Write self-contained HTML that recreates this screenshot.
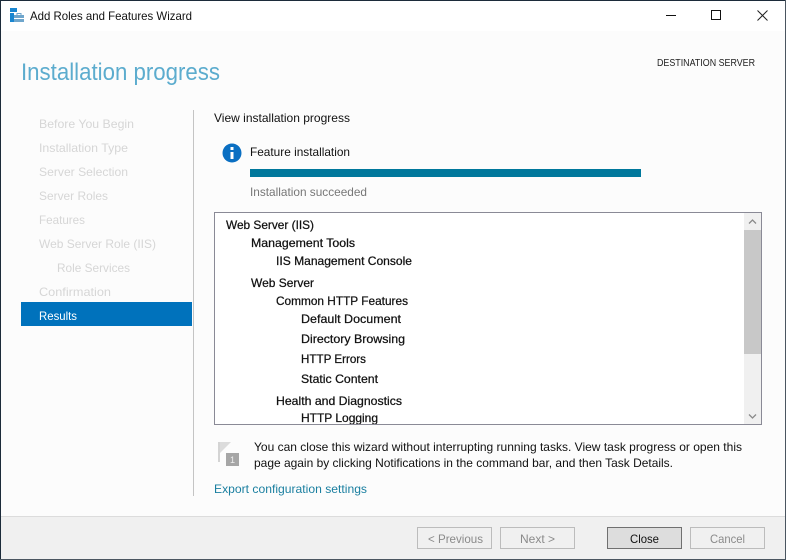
<!DOCTYPE html>
<html><head><meta charset="utf-8"><style>
html,body{margin:0;padding:0;width:786px;height:560px;overflow:hidden;background:#fcfcfc}
svg{display:block}
text{font-family:"Liberation Sans",sans-serif;font-size:12px;fill:#111}
.nav{fill:#d6d6d6}
.b{stroke:#111;stroke-width:.25}
</style></head><body>
<svg width="786" height="560" viewBox="0 0 786 560" xmlns="http://www.w3.org/2000/svg">
<rect width="786" height="560" fill="#fcfcfc"/>
<rect width="786" height="31" fill="#fff"/>
<rect x="10" y="8" width="7" height="4" fill="#1a86d0"/>
<rect x="10" y="13" width="4" height="9" fill="#1a86d0"/>
<rect x="14" y="15" width="10" height="7" fill="#6fa6cc"/>
<rect x="17" y="13.500" width="4" height="2" fill="none" stroke="#6fa6cc"/>
<rect x="14" y="18" width="10" height="1" fill="#fff"/>
<text x="30" y="20" textLength="162" lengthAdjust="spacingAndGlyphs">Add Roles and Features Wizard</text>
<path d="M666 15.500H676" stroke="#111" fill="none"/>
<rect x="711.500" y="10.500" width="9" height="9" fill="none" stroke="#111"/>
<path d="M757.500 10.500L767.500 20.500M767.500 10.500L757.500 20.500" stroke="#222" fill="none"/>
<text x="21" y="80" textLength="199" lengthAdjust="spacingAndGlyphs" style="font-size:24px;fill:#5cacce">Installation progress</text>
<text x="657" y="66" textLength="98" lengthAdjust="spacingAndGlyphs" style="font-size:10px;fill:#222">DESTINATION SERVER</text>

<text class="nav" x="39" y="128" textLength="95" lengthAdjust="spacingAndGlyphs">Before You Begin</text>
<text class="nav" x="39" y="152" textLength="89" lengthAdjust="spacingAndGlyphs">Installation Type</text>
<text class="nav" x="39" y="176" textLength="89" lengthAdjust="spacingAndGlyphs">Server Selection</text>
<text class="nav" x="39" y="200" textLength="69" lengthAdjust="spacingAndGlyphs">Server Roles</text>
<text class="nav" x="39" y="224" textLength="46" lengthAdjust="spacingAndGlyphs">Features</text>
<text class="nav" x="39" y="248" textLength="117" lengthAdjust="spacingAndGlyphs">Web Server Role (IIS)</text>
<text class="nav" x="57" y="272" textLength="73" lengthAdjust="spacingAndGlyphs">Role Services</text>
<text class="nav" x="39" y="296" textLength="72" lengthAdjust="spacingAndGlyphs">Confirmation</text>
<rect x="21" y="302" width="171" height="24" fill="#0072bc"/>
<text x="39" y="320" textLength="38" lengthAdjust="spacingAndGlyphs" style="fill:#fff">Results</text>
<rect x="193" y="110" width="1" height="386" fill="#c4c4c4"/>

<text x="214" y="122" textLength="136" lengthAdjust="spacingAndGlyphs">View installation progress</text>
<circle cx="232" cy="153" r="9.500" fill="#0a6fc2"/>
<rect x="230.500" y="152" width="3" height="7" fill="#fff"/>
<rect x="230.500" y="147" width="3" height="3" fill="#fff"/>
<text x="250" y="156" textLength="100" lengthAdjust="spacingAndGlyphs">Feature installation</text>
<rect x="250" y="169" width="391" height="8" fill="#00789c"/>
<text x="250" y="196" textLength="117" lengthAdjust="spacingAndGlyphs" style="fill:#777">Installation succeeded</text>

<rect x="214.500" y="212.500" width="547" height="212" fill="#fff" stroke="#8a8a96"/>
<rect x="744" y="213" width="17" height="211" fill="#f0f0f0"/>
<rect x="744" y="230" width="17" height="124" fill="#c8c8c8"/>
<path d="M749 223.500L752.500 220L756 223.500M749 414.500L752.500 418L756 414.500" stroke="#8a8a8a" stroke-width="1.300" fill="none"/>
<svg x="215" y="213" width="529" height="211" viewBox="215 213 529 211">
<text class="b" x="226" y="229" textLength="88" lengthAdjust="spacingAndGlyphs">Web Server (IIS)</text>
<text class="b" x="251" y="247" textLength="104" lengthAdjust="spacingAndGlyphs">Management Tools</text>
<text class="b" x="276" y="265" textLength="136" lengthAdjust="spacingAndGlyphs">IIS Management Console</text>
<text class="b" x="251" y="287" textLength="63" lengthAdjust="spacingAndGlyphs">Web Server</text>
<text class="b" x="276" y="305" textLength="132" lengthAdjust="spacingAndGlyphs">Common HTTP Features</text>
<text class="b" x="301" y="323" textLength="100" lengthAdjust="spacingAndGlyphs">Default Document</text>
<text class="b" x="301" y="343" textLength="104" lengthAdjust="spacingAndGlyphs">Directory Browsing</text>
<text class="b" x="301" y="363" textLength="65" lengthAdjust="spacingAndGlyphs">HTTP Errors</text>
<text class="b" x="301" y="383" textLength="77" lengthAdjust="spacingAndGlyphs">Static Content</text>
<text class="b" x="276" y="405" textLength="126" lengthAdjust="spacingAndGlyphs">Health and Diagnostics</text>
<text class="b" x="301" y="422" textLength="77" lengthAdjust="spacingAndGlyphs">HTTP Logging</text>
</svg>

<path d="M219 442V462" stroke="#d4d4d4" stroke-width="2" fill="none"/>
<path d="M220 442H231L220 453Z" fill="#dcdcdc"/>
<rect x="226" y="453" width="13" height="13" fill="#a6a6a6"/>
<text x="230" y="463" style="font-size:9px;fill:#eee">1</text>
<text x="254" y="451" textLength="488" lengthAdjust="spacingAndGlyphs">You can close this wizard without interrupting running tasks. View task progress or open this</text>
<text x="254" y="467" textLength="419" lengthAdjust="spacingAndGlyphs">page again by clicking Notifications in the command bar, and then Task Details.</text>
<text x="214" y="493" textLength="153" lengthAdjust="spacingAndGlyphs" style="fill:#1a7fa0">Export configuration settings</text>

<rect x="0" y="516" width="786" height="44" fill="#f0f0f0"/>
<rect x="0" y="516" width="786" height="1" fill="#dcdcdc"/>
<rect x="417.500" y="527.500" width="74" height="21" fill="#f0f0f0" stroke="#bcbcbc"/>
<text x="428" y="543" textLength="55" lengthAdjust="spacingAndGlyphs" style="fill:#8a8a8a">&lt; Previous</text>
<rect x="500.500" y="527.500" width="74" height="21" fill="#f0f0f0" stroke="#bcbcbc"/>
<text x="520" y="543" textLength="35" lengthAdjust="spacingAndGlyphs" style="fill:#8a8a8a">Next &gt;</text>
<rect x="607.500" y="527.500" width="74" height="21" fill="#dddddd" stroke="#707070"/>
<text x="630" y="543" textLength="29" lengthAdjust="spacingAndGlyphs">Close</text>
<rect x="690.500" y="527.500" width="74" height="21" fill="#f0f0f0" stroke="#bcbcbc"/>
<text x="710" y="543" textLength="35" lengthAdjust="spacingAndGlyphs" style="fill:#8a8a8a">Cancel</text>

<rect x="0" y="0" width="786" height="1" fill="#1c2b3a"/>
<rect x="0" y="0" width="1" height="560" fill="#1c2b3a"/>
<rect x="785" y="0" width="1" height="560" fill="#4a5560"/>
<rect x="0" y="559" width="786" height="1" fill="#4a5560"/>
</svg>
</body></html>
